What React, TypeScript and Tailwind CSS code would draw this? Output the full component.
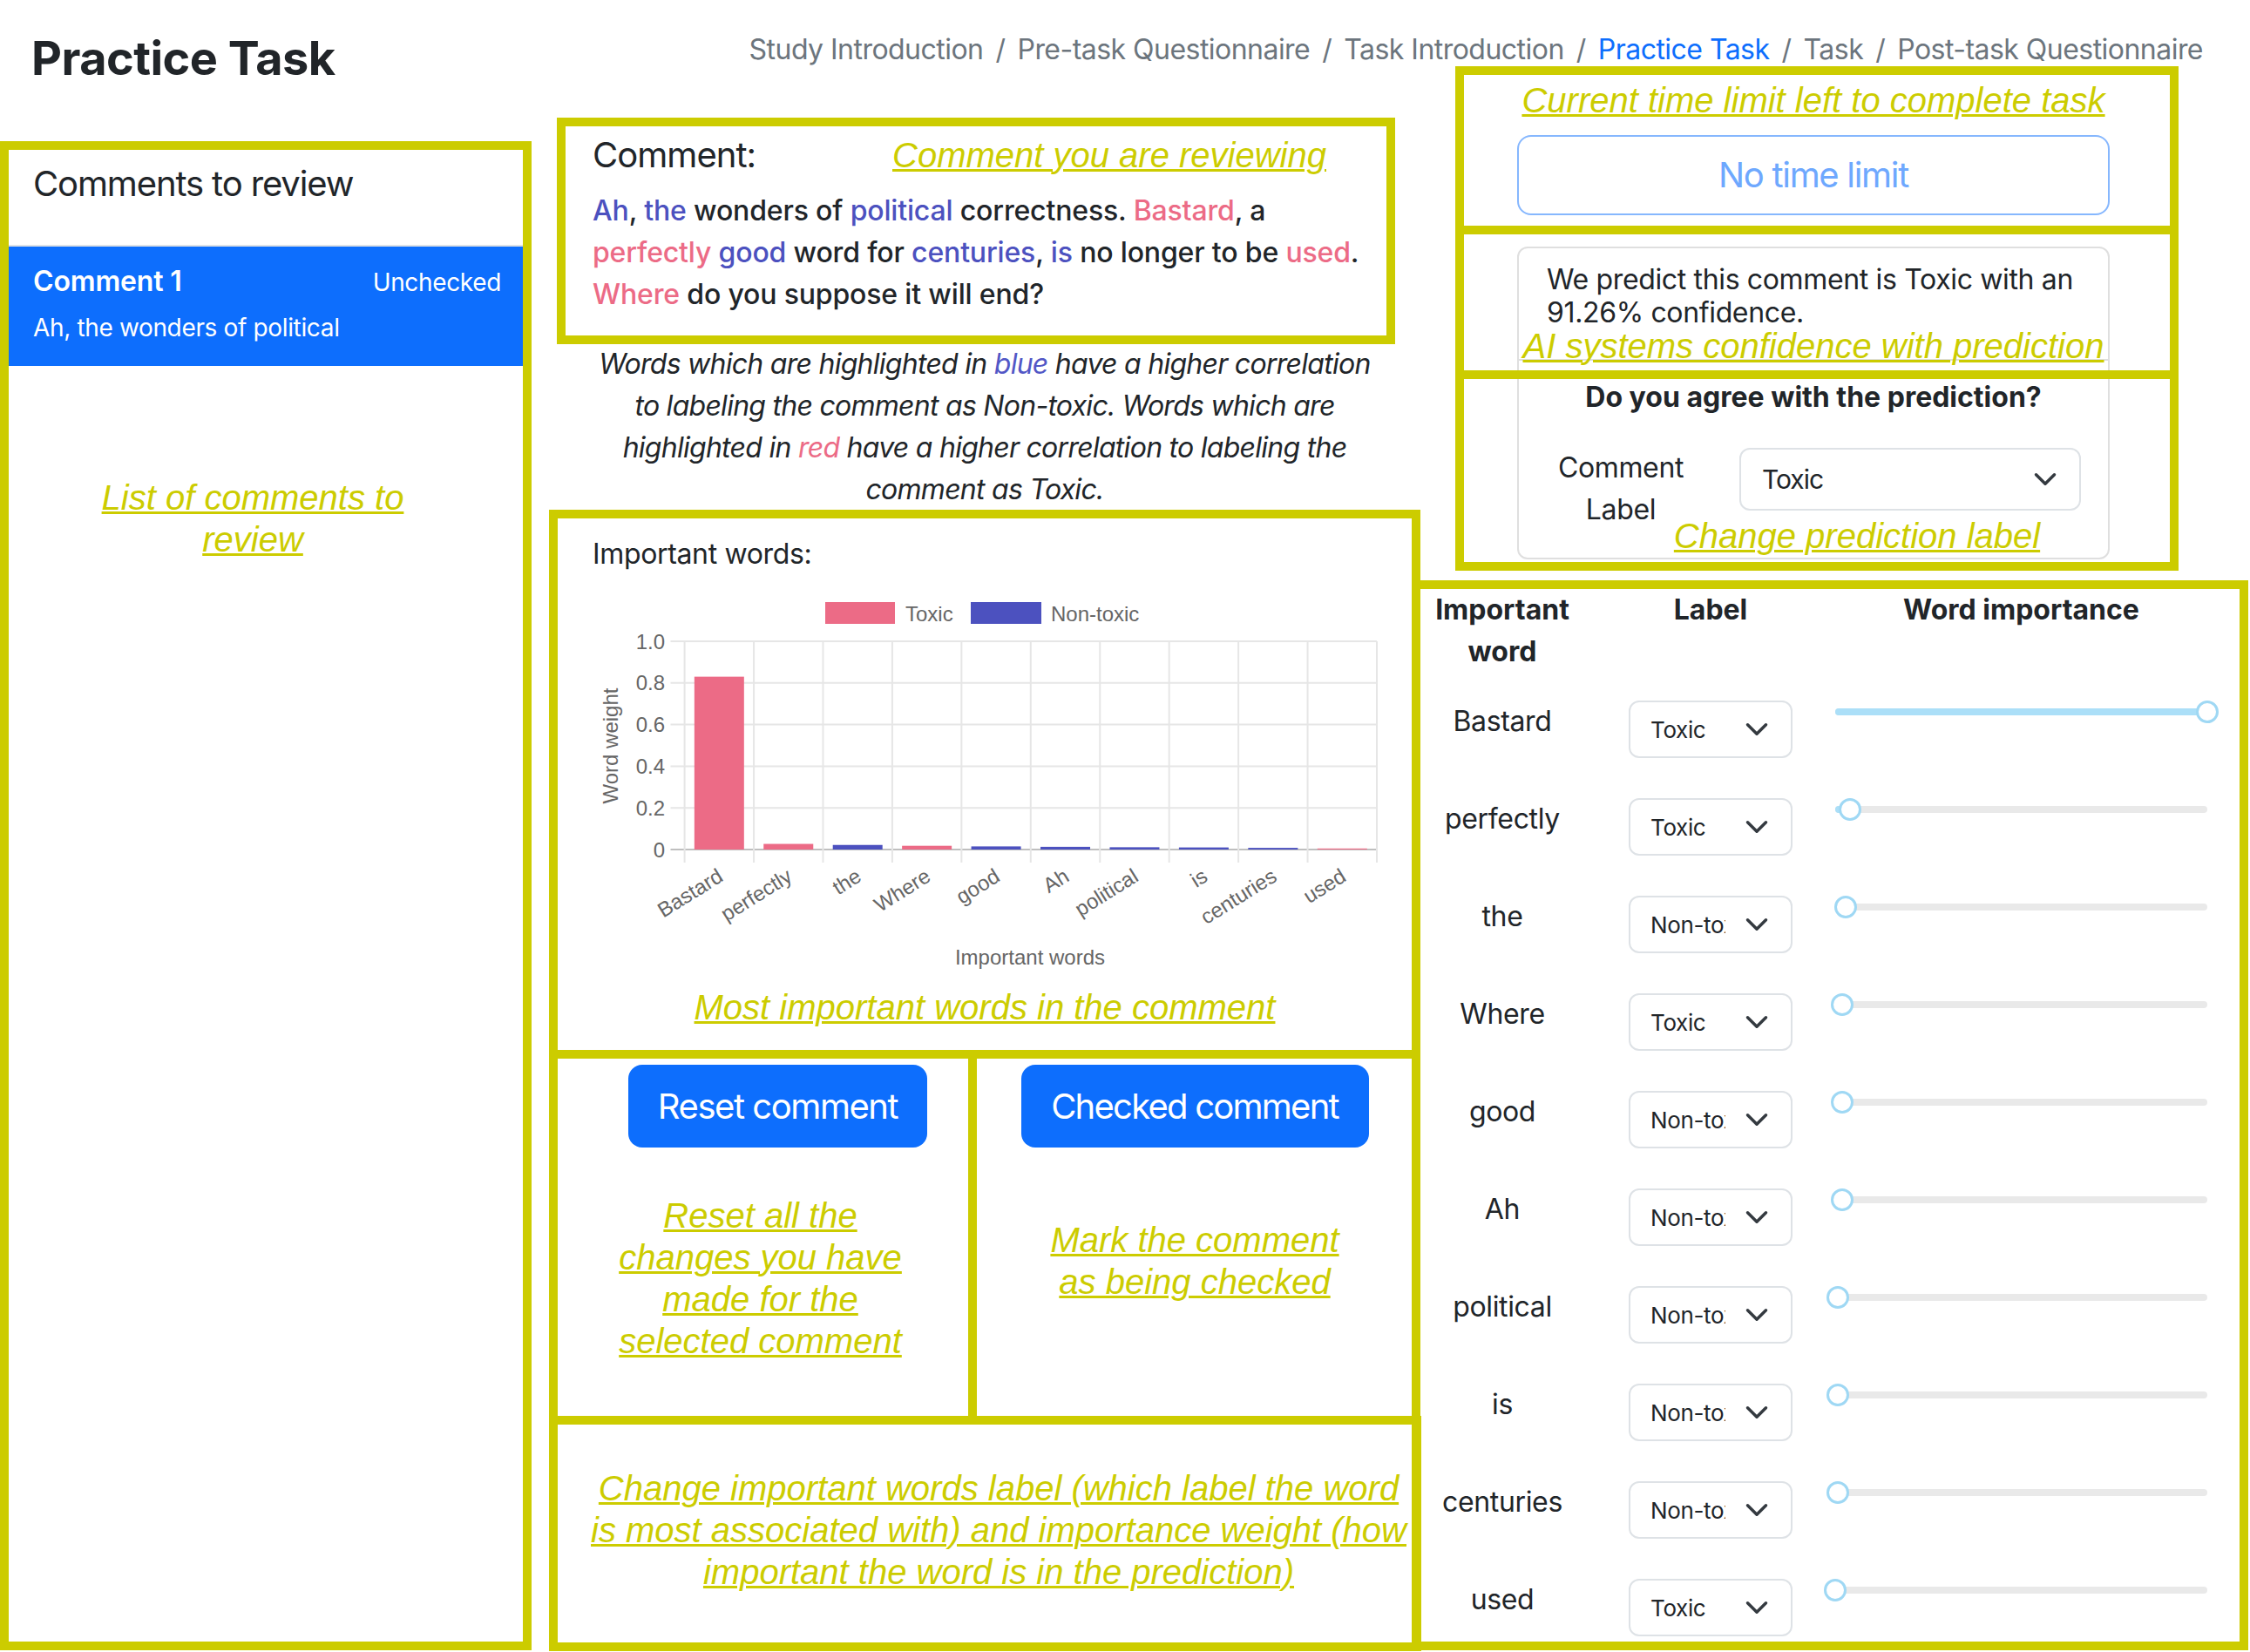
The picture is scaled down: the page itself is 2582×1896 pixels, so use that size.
import React from "react";

type Word = { word: string; label: string; value: number };

const words: Word[] = [
  { word: "Bastard", label: "Toxic", value: 1 },
  { word: "perfectly", label: "Toxic", value: 0.04 },
  { word: "the", label: "Non-toxic", value: 0.028 },
  { word: "Where", label: "Toxic", value: 0.019 },
  { word: "good", label: "Non-toxic", value: 0.019 },
  { word: "Ah", label: "Non-toxic", value: 0.019 },
  { word: "political", label: "Non-toxic", value: 0.007 },
  { word: "is", label: "Non-toxic", value: 0.007 },
  { word: "centuries", label: "Non-toxic", value: 0.007 },
  { word: "used", label: "Toxic", value: 0 },
];

const weights = [0.83, 0.027, 0.022, 0.018, 0.015, 0.013, 0.011, 0.01, 0.008, 0.005];

const crumbs = [
  "Study Introduction",
  "Pre-task Questionnaire",
  "Task Introduction",
  "Practice Task",
  "Task",
  "Post-task Questionnaire",
];

const PINK = "#ec6b86";
const BLUE = "#4c51bf";

const Note = ({ children, className = "" }: { children: React.ReactNode; className?: string }) => (
  <p
    className={`font-['Liberation_Sans',Arial,sans-serif] text-[40px] italic leading-[48px] tracking-normal text-[#cccc00] underline decoration-[3px] ${className}`}
  >
    {children}
  </p>
);

const Frame = ({ className }: { className: string }) => (
  <div className={`pointer-events-none absolute border-[10px] border-[#cccc00] ${className}`} />
);

const Chevron = () => (
  <svg width="28" height="28" viewBox="0 0 16 16" fill="none">
    <path d="m2 5 6 6 6-6" stroke="#343a40" strokeWidth="2" strokeLinecap="round" strokeLinejoin="round" />
  </svg>
);

const Slider = ({ value }: { value: number }) => {
  const w = 427;
  return (
    <div className="relative ml-[1px] h-[26px] w-[427px]">
      <div className="absolute left-0 right-0 top-[9px] h-[8px] rounded-full bg-[#e9e9e9]" />
      <div className="absolute left-0 top-[9px] h-[8px] rounded-full bg-[#abdff8]" style={{ width: value * w }} />
      <div
        className="absolute top-0 h-[26px] w-[26px] rounded-full border-[3px] border-[#9fd8f4] bg-white"
        style={{ left: value * w - 13 }}
      />
    </div>
  );
};

const BarChart = () => {
  const x0 = 105.6;
  const cat = 79.44;
  const zero = 315;
  const unit = 239;
  const ticks = ["0", "0.2", "0.4", "0.6", "0.8", "1.0"];
  const font = "Liberation Sans, Arial, sans-serif";
  return (
    <svg width="920" height="460" viewBox="0 0 920 460" className="block" letterSpacing="0">
      <rect x="267" y="31" width="80" height="25" fill={PINK} />
      <text x="359" y="44" fontSize="24" fill="#666" fontFamily={font} dominantBaseline="central">
        Toxic
      </text>
      <rect x="434" y="31" width="81" height="25" fill={BLUE} />
      <text x="526" y="44" fontSize="24" fill="#666" fontFamily={font} dominantBaseline="central">
        Non-toxic
      </text>

      {ticks.map((t, k) => {
        const y = zero - k * (unit / 5);
        return (
          <g key={t}>
            <line x1="89.5" x2="900" y1={y} y2={y} stroke={k === 0 ? "#bfbfbf" : "#e6e6e6"} strokeWidth="2" />
            <text x="83" y={y} fontSize="24" fill="#666" fontFamily={font} textAnchor="end" dominantBaseline="central">
              {t}
            </text>
          </g>
        );
      })}
      {Array.from({ length: 11 }).map((_, i) => (
        <line key={i} x1={x0 + i * cat} x2={x0 + i * cat} y1="76" y2="330" stroke="#e6e6e6" strokeWidth="2" />
      ))}

      {weights.map((v, i) => {
        const cx = x0 + cat / 2 + i * cat;
        const toxic = words[i].label === "Toxic";
        return (
          <rect
            key={i}
            x={cx - 28.5}
            y={zero - v * unit}
            width="57"
            height={Math.max(v * unit, 1)}
            fill={toxic ? PINK : BLUE}
          />
        );
      })}

      {words.map((w, i) => {
        const cx = x0 + cat / 2 + i * cat + 6;
        return (
          <text
            key={w.word}
            x={cx}
            y="350"
            fontSize="24"
            fill="#666"
            fontFamily={font}
            textAnchor="end"
            transform={`rotate(-32 ${cx} 350)`}
          >
            {w.word}
          </text>
        );
      })}

      <text
        x="20"
        y="196"
        fontSize="24"
        fill="#666"
        fontFamily={font}
        textAnchor="middle"
        dominantBaseline="central"
        transform="rotate(-90 20 196)"
      >
        Word weight
      </text>
      <text x="502" y="438" fontSize="24" fill="#666" fontFamily={font} textAnchor="middle" dominantBaseline="central">
        Important words
      </text>
    </svg>
  );
};

const Blue = ({ children }: { children: React.ReactNode }) => <span className="text-[#4c51bf]">{children}</span>;
const Red = ({ children }: { children: React.ReactNode }) => <span className="text-[#ec6b86]">{children}</span>;

export default function App() {
  return (
    <div className="relative h-[1896px] w-[2582px] overflow-hidden bg-white font-['Inter',sans-serif] tracking-[-0.35px] text-[#212529]">
      <header className="flex h-[91px] items-start justify-between pl-[36px] pr-[54px] pt-[33px]">
        <h1 className="text-[54px] font-bold leading-[67px] tracking-[-0.54px]">Practice Task</h1>
        <nav className="flex text-[32px] leading-[48px] tracking-[-0.53px] text-[#6c757d]">
          {crumbs.map((c, i) => (
            <span key={c} className="flex">
              {i > 0 && <span className="px-[14px]">/</span>}
              <span className={i === 3 ? "text-[#0d6efd]" : ""}>{c}</span>
            </span>
          ))}
        </nav>
      </header>

      <div className="flex h-[1805px]">
        {/* comments list */}
        <aside className="w-[600px] pl-[10px] pt-[79px]">
          <div className="border-b-2 border-[#dee2e6] pb-[46px] pl-[28px] pt-[17px] text-[40px] leading-[48px] tracking-[-1.13px]">
            Comments to review
          </div>
          <div className="h-[137px] bg-[#0d6efd] pl-[28px] pr-[25px] pt-[16px] text-white">
            <div className="flex items-baseline justify-between">
              <span className="text-[32px] font-semibold leading-[48px] tracking-[-0.16px]">Comment 1</span>
              <span className="text-[28px] leading-[48px]">Unchecked</span>
            </div>
            <div className="mt-[7px] text-[28px] leading-[42px]">Ah, the wonders of political</div>
          </div>
          <Note className="mt-[127px] pr-[30px] text-center">
            List of comments to
            <br />
            review
          </Note>
        </aside>

        {/* comment and chart */}
        <main className="w-[1027px] pt-[63px]">
          <div className="flex pl-[80px]">
            <span className="w-[344px] text-[40px] leading-[48px] tracking-[-0.97px]">Comment:</span>
            <Note>Comment you are reviewing</Note>
          </div>
          <p className="mt-[16px] whitespace-nowrap pl-[80px] text-[32px] font-medium leading-[48px] tracking-[-0.16px]">
            <Blue>Ah</Blue>, <Blue>the</Blue> wonders of <Blue>political</Blue> correctness. <Red>Bastard</Red>, a
            <br />
            <Red>perfectly</Red> <Blue>good</Blue> word for <Blue>centuries</Blue>, <Blue>is</Blue> no longer to be{" "}
            <Red>used</Red>.
            <br />
            <Red>Where</Red> do you suppose it will end?
          </p>
          <p className="ml-[60px] mt-[32px] w-[940px] whitespace-nowrap text-center text-[32px] italic leading-[48px] tracking-[-0.73px]">
            Words which are highlighted in <span className="text-[#5257c6]">blue</span> have a higher correlation
            <br />
            to labeling the comment as Non-toxic. Words which are
            <br />
            highlighted in <Red>red</Red> have a higher correlation to labeling the
            <br />
            comment as Toxic.
          </p>

          <div className="mt-[26px] pl-[80px] text-[32px] leading-[48px]">Important words:</div>
          <div className="pl-[80px]">
            <BarChart />
          </div>
          <Note className="ml-[80px] mt-[12px] w-[900px] text-center">Most important words in the comment</Note>

          <div className="mt-[42px] flex h-[462px] pl-[30px]">
            <div className="flex w-[485px] flex-col items-center">
              <button className="ml-[40px] h-[95px] w-[343px] rounded-[16px] bg-[#0d6efd] text-[40px] tracking-[-1.45px] text-white">
                Reset comment
              </button>
              <Note className="mt-[54px] text-center">
                Reset all the
                <br />
                changes you have
                <br />
                made for the
                <br />
                selected comment
              </Note>
            </div>
            <div className="flex w-[512px] flex-col items-center">
              <button className="h-[95px] w-[399px] rounded-[16px] bg-[#0d6efd] text-[40px] tracking-[-1.76px] text-white">
                Checked comment
              </button>
              <Note className="mt-[82px] text-center">
                Mark the comment
                <br />
                as being checked
              </Note>
            </div>
          </div>
          <Note className="w-[1092px] whitespace-nowrap text-center">
            Change important words label (which label the word
            <br />
            is most associated with) and importance weight (how
            <br />
            important the word is in the prediction)
          </Note>
        </main>

        {/* prediction and word table */}
        <section className="w-[955px]">
          <div className="ml-[114px] w-[680px]">
            <Note className="text-center">Current time limit left to complete task</Note>
            <div className="mt-[16px] flex h-[92px] items-center justify-center rounded-[16px] border-2 border-[#86b7fe] text-[40px] tracking-[-1.31px] text-[#6ea8fe]">
              No time limit
            </div>
            <div className="mt-[36px] h-[359px] rounded-[12px] border-2 border-[#dfdfdf]">
              <div className="border-b-2 border-[#dfdfdf] pt-[17px]">
                <p className="pl-[32px] text-[32px] leading-[38px]">
                  We predict this comment is Toxic with an
                  <br />
                  91.26% confidence.
                </p>
                <div className="flex h-[34px] flex-col">
                  <Note className="-mt-[5px] text-center leading-[40px]">AI systems confidence with prediction</Note>
                </div>
              </div>
              <div className="pt-[18px]">
                <p className="text-center text-[32px] font-bold leading-[48px] tracking-normal">
                  Do you agree with the prediction?
                </p>
                <div className="mt-[33px] flex items-start">
                  <span className="ml-[22px] w-[190px] text-center text-[32px] leading-[48px]">
                    Comment
                    <br />
                    Label
                  </span>
                  <div className="ml-[41px] mt-[1px] flex h-[72px] w-[392px] items-center rounded-[12px] border-2 border-[#dee2e6] pl-[24px] pr-[25px]">
                    <span className="text-[30px] tracking-[-1px]">Toxic</span>
                    <span className="ml-auto">
                      <Chevron />
                    </span>
                  </div>
                </div>
                <Note className="-mt-[18px] pl-[100px] text-center leading-[40px]">Change prediction label</Note>
              </div>
            </div>
          </div>

          <div className="mt-[34px]">
            <div className="flex text-center text-[32px] font-bold leading-[48px] tracking-normal">
              <span className="w-[194px]">
                Important
                <br />
                word
              </span>
              <span className="w-[284px]">Label</span>
              <span className="w-[429px]">Word importance</span>
            </div>
            <div className="mt-[32px] flex flex-col gap-[46px]">
              {words.map((w) => (
                <div key={w.word} className="flex h-[66px] items-start">
                  <span className="w-[194px] text-center text-[32px] leading-[48px]">{w.word}</span>
                  <div className="w-[284px]">
                    <div className="mx-auto flex h-[66px] w-[188px] items-center rounded-[12px] border-2 border-[#dee2e6] pl-[23px] pr-[25px]">
                      <span className="w-[86px] overflow-hidden whitespace-nowrap text-[26px]">{w.label}</span>
                      <span className="ml-auto">
                        <Chevron />
                      </span>
                    </div>
                  </div>
                  <Slider value={w.value} />
                </div>
              ))}
            </div>
          </div>
        </section>
      </div>

      {/* annotation frames */}
      <Frame className="left-[0px] top-[162px] h-[1732px] w-[610px]" />
      <Frame className="left-[639px] top-[135px] h-[260px] w-[962px]" />
      <Frame className="left-[630px] top-[585px] h-[630px] w-[1000px]" />
      <Frame className="left-[630px] top-[1205px] h-[430px] w-[491px]" />
      <Frame className="left-[1111px] top-[1205px] h-[430px] w-[519px]" />
      <Frame className="left-[630px] top-[1625px] h-[270px] w-[1001px]" />
      <Frame className="left-[1620px] top-[666px] h-[1228px] w-[960px]" />
      <Frame className="left-[1670px] top-[76px] h-[193px] w-[830px]" />
      <Frame className="left-[1670px] top-[259px] h-[176px] w-[830px]" />
      <Frame className="left-[1670px] top-[425px] h-[230px] w-[830px]" />
    </div>
  );
}
